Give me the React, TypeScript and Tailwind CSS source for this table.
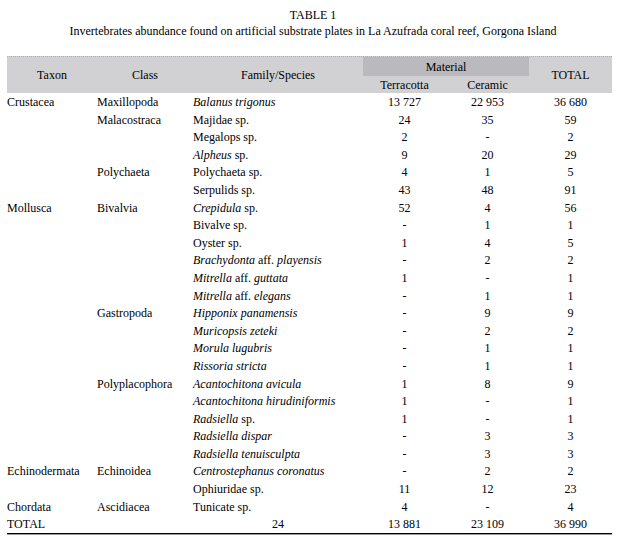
import type { ReactNode } from 'react';

type Row = {
  taxon?: string;
  cls?: string;
  species: ReactNode;
  terra: string;
  ceramic: string;
  total: string;
};

const I = ({ children }: { children: ReactNode }) => <i>{children}</i>;

const ROWS: Row[] = [
  { taxon: 'Crustacea', cls: 'Maxillopoda', species: <I>Balanus trigonus</I>, terra: '13 727', ceramic: '22 953', total: '36 680' },
  { cls: 'Malacostraca', species: 'Majidae sp.', terra: '24', ceramic: '35', total: '59' },
  { species: 'Megalops sp.', terra: '2', ceramic: '-', total: '2' },
  { species: <><I>Alpheus</I> sp.</>, terra: '9', ceramic: '20', total: '29' },
  { cls: 'Polychaeta', species: 'Polychaeta sp.', terra: '4', ceramic: '1', total: '5' },
  { species: 'Serpulids sp.', terra: '43', ceramic: '48', total: '91' },
  { taxon: 'Mollusca', cls: 'Bivalvia', species: <><I>Crepidula</I> sp.</>, terra: '52', ceramic: '4', total: '56' },
  { species: 'Bivalve sp.', terra: '-', ceramic: '1', total: '1' },
  { species: 'Oyster sp.', terra: '1', ceramic: '4', total: '5' },
  { species: <><I>Brachydonta</I> aff. <I>playensis</I></>, terra: '-', ceramic: '2', total: '2' },
  { species: <><I>Mitrella</I> aff. <I>guttata</I></>, terra: '1', ceramic: '-', total: '1' },
  { species: <><I>Mitrella</I> aff. <I>elegans</I></>, terra: '-', ceramic: '1', total: '1' },
  { cls: 'Gastropoda', species: <I>Hipponix panamensis</I>, terra: '-', ceramic: '9', total: '9' },
  { species: <I>Muricopsis zeteki</I>, terra: '-', ceramic: '2', total: '2' },
  { species: <I>Morula lugubris</I>, terra: '-', ceramic: '1', total: '1' },
  { species: <I>Rissoria stricta</I>, terra: '-', ceramic: '1', total: '1' },
  { cls: 'Polyplacophora', species: <I>Acantochitona avicula</I>, terra: '1', ceramic: '8', total: '9' },
  { species: <I>Acantochitona hirudiniformis</I>, terra: '1', ceramic: '-', total: '1' },
  { species: <><I>Radsiella</I> sp.</>, terra: '1', ceramic: '-', total: '1' },
  { species: <I>Radsiella dispar</I>, terra: '-', ceramic: '3', total: '3' },
  { species: <I>Radsiella tenuisculpta</I>, terra: '-', ceramic: '3', total: '3' },
  { taxon: 'Echinodermata', cls: 'Echinoidea', species: <I>Centrostephanus coronatus</I>, terra: '-', ceramic: '2', total: '2' },
  { species: 'Ophiuridae sp.', terra: '11', ceramic: '12', total: '23' },
  { taxon: 'Chordata', cls: 'Ascidiacea', species: 'Tunicate sp.', terra: '4', ceramic: '-', total: '4' },
];

const COLS = 'grid grid-cols-[90px_96px_170px_83px_83px_83px]';

export default function App() {
  return (
    <div className="w-[626px] h-[546px] bg-white text-black text-[12px] font-['Liberation_Serif','Times_New_Roman',serif] overflow-hidden">
      <div className="pt-[8px] text-center leading-[15.5px]">
        <div>TABLE 1</div>
        <div>Invertebrates abundance found on artificial substrate plates in La Azufrada coral reef, Gorgona Island</div>
      </div>

      <div className="ml-[7px] mt-[17px] w-[605px]">
        {/* header */}
        <div className={`${COLS} grid-rows-[19px_17px] bg-[#d1d1d4] border-t border-dotted border-[#b0b0b4]`}>
          <div className="row-span-2 flex items-center justify-center">Taxon</div>
          <div className="row-span-2 flex items-center justify-center">Class</div>
          <div className="row-span-2 flex items-center justify-center">Family/Species</div>
          <div className="col-span-2 flex items-center justify-center bg-[#b9b9be]">Material</div>
          <div className="row-span-2 flex items-center justify-center">TOTAL</div>
          <div className="flex items-center justify-center">Terracotta</div>
          <div className="flex items-center justify-center">Ceramic</div>
        </div>

        {/* body */}
        {ROWS.map((r, i) => (
          <div key={i} className={`${COLS} h-[17.6px] items-center whitespace-nowrap`}>
            <div>{r.taxon}</div>
            <div>{r.cls}</div>
            <div>{r.species}</div>
            <div className="text-center">{r.terra}</div>
            <div className="text-center">{r.ceramic}</div>
            <div className="text-center">{r.total}</div>
          </div>
        ))}
        <div className={`${COLS} h-[17.6px] items-center`}>
          <div>TOTAL</div>
          <div />
          <div className="text-center">24</div>
          <div className="text-center">13 881</div>
          <div className="text-center">23 109</div>
          <div className="text-center">36 990</div>
        </div>
        <div className="h-px bg-black" />
        <div className="h-px bg-[#9a9a9a]" />
      </div>
    </div>
  );
}
